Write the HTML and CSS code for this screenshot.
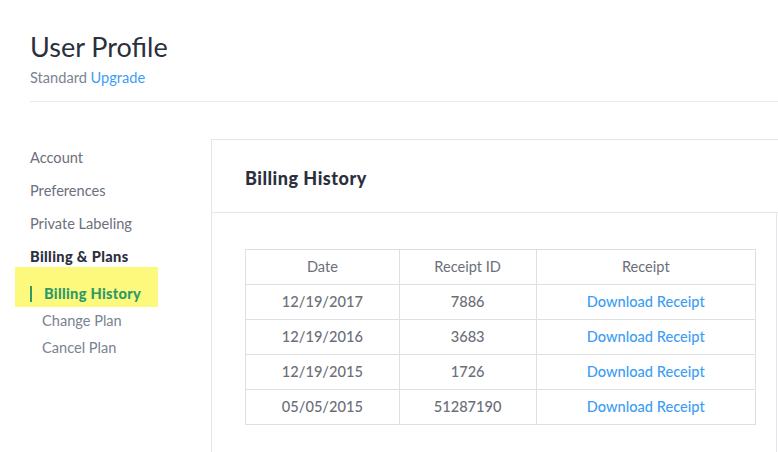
FILE: index.html
```html
<!DOCTYPE html>
<html>
<head>
<meta charset="utf-8">
<link rel="stylesheet" href="styles.css">
</head>
<body>
<div class="page">
  <header class="top">
    <h1 class="title">User Profile</h1>
    <div class="plan">Standard <a class="link" href="#">Upgrade</a></div>
  </header>
  <div class="layout">
    <nav class="sidebar">
      <div class="nav-item">Account</div>
      <div class="nav-item">Preferences</div>
      <div class="nav-item">Private Labeling</div>
      <div class="nav-item nav-strong">Billing &amp; Plans</div>
      <div class="subnav">
        <div class="sub-item sub-active">Billing History</div>
        <div class="sub-item">Change Plan</div>
        <div class="sub-item">Cancel Plan</div>
      </div>
    </nav>
    <main class="card">
      <div class="card-head">Billing History</div>
      <div class="card-body">
        <table class="bills">
          <thead>
            <tr><th class="c1">Date</th><th class="c2">Receipt ID</th><th class="c3">Receipt</th></tr>
          </thead>
          <tbody>
            <tr><td>12/19/2017</td><td>7886</td><td><a class="link" href="#">Download Receipt</a></td></tr>
            <tr><td>12/19/2016</td><td>3683</td><td><a class="link" href="#">Download Receipt</a></td></tr>
            <tr><td>12/19/2015</td><td>1726</td><td><a class="link" href="#">Download Receipt</a></td></tr>
            <tr><td>05/05/2015</td><td>51287190</td><td><a class="link" href="#">Download Receipt</a></td></tr>
          </tbody>
        </table>
      </div>
    </main>
  </div>
</div>
</body>
</html>
```
FILE: styles.css
```css
* { box-sizing: border-box; }
html, body { margin: 0; padding: 0; }
body {
  font-family: Lato, "Noto Sans", "Liberation Sans", sans-serif;
  color: #2b2f3e;
  background: #fff;
  overflow: hidden;
  height: 452px;
}
.page { padding-left: 30px; }
.top {
  padding-top: 30px;
  padding-bottom: 11px;
  border-bottom: 1px solid #e8e8ee;
}
.title {
  margin: 0;
  font-size: 27px;
  font-weight: 400;
  line-height: 34px;
  color: #2b2f3e;
}
.plan {
  font-size: 14.6px;
  line-height: 24px;
  color: #7b8292;
  margin-top: 2px;
}
.link { color: #3d9df3; text-decoration: none; }
.layout {
  display: flex;
  margin-top: 37px;
}
.sidebar {
  width: 181px;
  flex: none;
  padding-top: 2px;
  isolation: isolate;
}
.nav-item {
  font-size: 14.6px;
  line-height: 33px;
  color: #6b707c;
}
.nav-strong { font-weight: 900; color: #2b2f3e; letter-spacing: 0.35px; }
.subnav { margin-top: 7px; padding-left: 12px; }
.sub-item {
  position: relative;
  font-size: 14.6px;
  line-height: 27px;
  color: #7b8292;
}
.sub-active {
  font-weight: 900;
  color: #2e9a6a;
  padding-left: 2px;
  letter-spacing: 0.3px;
}
.sub-active::before {
  content: "";
  position: absolute;
  left: -27px;
  top: -13px;
  width: 143px;
  height: 40px;
  background: #fdf97c;
  z-index: -1;
}
.sub-active::after {
  content: "";
  position: absolute;
  left: -12px;
  top: 6px;
  width: 2px;
  height: 16px;
  background: #2e9a6a;
}
.card {
  flex: 1;
  border-top: 1px solid #e6e6ea;
  border-left: 1px solid #e6e6ea;
  min-height: 340px;
}
.card-head {
  height: 73px;
  padding-left: 33px;
  padding-top: 4px;
  display: flex;
  align-items: center;
  font-size: 18px;
  font-weight: 900;
  letter-spacing: 0.5px;
  color: #2b2f3e;
  border-bottom: 1px solid #e6e6ea;
}
.card-body {
  margin-right: 1px;
  border-right: 1px solid #e6e6ea;
  padding: 36px 20px 40px 33px;
  min-height: 270px;
}
.bills {
  border-collapse: collapse;
  width: 511px;
  font-size: 14.6px;
  color: #6b6f78;
}
.bills th, .bills td {
  border: 1px solid #dedfe3;
  height: 35px;
  padding: 0 0 2px;
  text-align: center;
  font-weight: 400;
}
.bills td { font-weight: 500; }
.c1 { width: 154px; }
.c2 { width: 137px; }
.c3 { width: 220px; }
```
